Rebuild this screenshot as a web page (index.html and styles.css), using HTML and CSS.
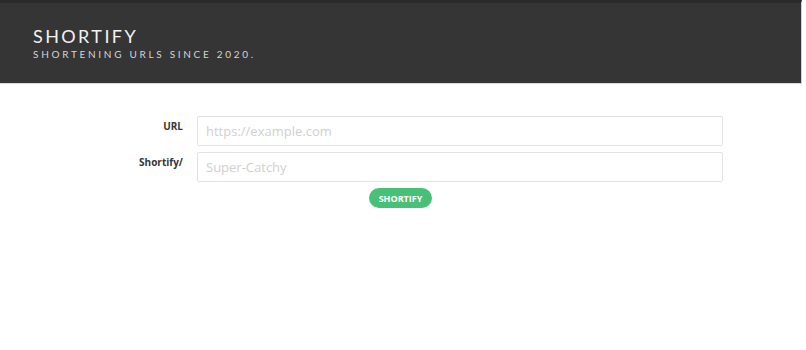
FILE: index.html
```html
<!DOCTYPE html>
<html>
<head>
<meta charset="utf-8">
<link rel="stylesheet" href="styles.css">
</head>
<body>
<header class="hero">
  <h1 class="title">SHORTIFY</h1>
  <p class="subtitle">SHORTENING URLS SINCE 2020.</p>
</header>
<main class="form">
  <div class="row">
    <label class="label">URL</label>
    <input class="input" type="text" placeholder="https://example.com">
  </div>
  <div class="row">
    <label class="label">Shortify/</label>
    <input class="input" type="text" placeholder="Super-Catchy">
  </div>
  <div class="actions">
    <button class="button">SHORTIFY</button>
  </div>
</main>
</body>
</html>
```
FILE: styles.css
```css
html, body { margin: 0; padding: 0; background: #fff; }
body { font-family: "Lato", "Open Sans", sans-serif; width: 806px; height: 350px; overflow: hidden; }
.hero {
  width: 802px;
  height: 84px;
  background: #353535;
  border-top: 3px solid #2a2a2a;
  border-right: 1px solid #cfcfcf;
  border-bottom: 1px solid #d8d8d8;
  padding: 0 0 0 33px;
  box-sizing: border-box;
}
.title {
  margin: 0;
  padding-top: 22px;
  font-size: 18px;
  font-weight: 400;
  letter-spacing: 2.4px;
  color: #f2f2f2;
  line-height: 22px;
}
.subtitle {
  margin: 1px 0 0;
  font-size: 10px;
  letter-spacing: 2.7px;
  color: #d4d4d4;
  line-height: 12px;
}
.form { padding-top: 32px; }
.row {
  display: flex;
  align-items: flex-start;
  margin-bottom: 6px;
}
.label {
  width: 197px;
  text-align: right;
  padding-right: 14px;
  box-sizing: border-box;
  font-family: "Open Sans", sans-serif;
  font-weight: 700;
  font-size: 10px;
  color: #363636;
  padding-top: 3px;
}
.input {
  width: 526px;
  height: 30px;
  box-sizing: border-box;
  border: 1px solid #e3e3e3;
  border-radius: 2px;
  padding: 0 8px;
  font-family: "Open Sans", sans-serif;
  font-size: 13px;
  color: #333;
  outline: none;
}
.input::placeholder { color: #d0d0d0; }
.actions {
  display: flex;
  justify-content: center;
  width: 801px;
}
.button {
  width: 63px;
  height: 20px;
  border: none;
  border-radius: 10px;
  background: #48c078;
  color: #fff;
  font-family: "Open Sans", sans-serif;
  font-weight: 700;
  font-size: 9px;
  padding: 0;
}
```
